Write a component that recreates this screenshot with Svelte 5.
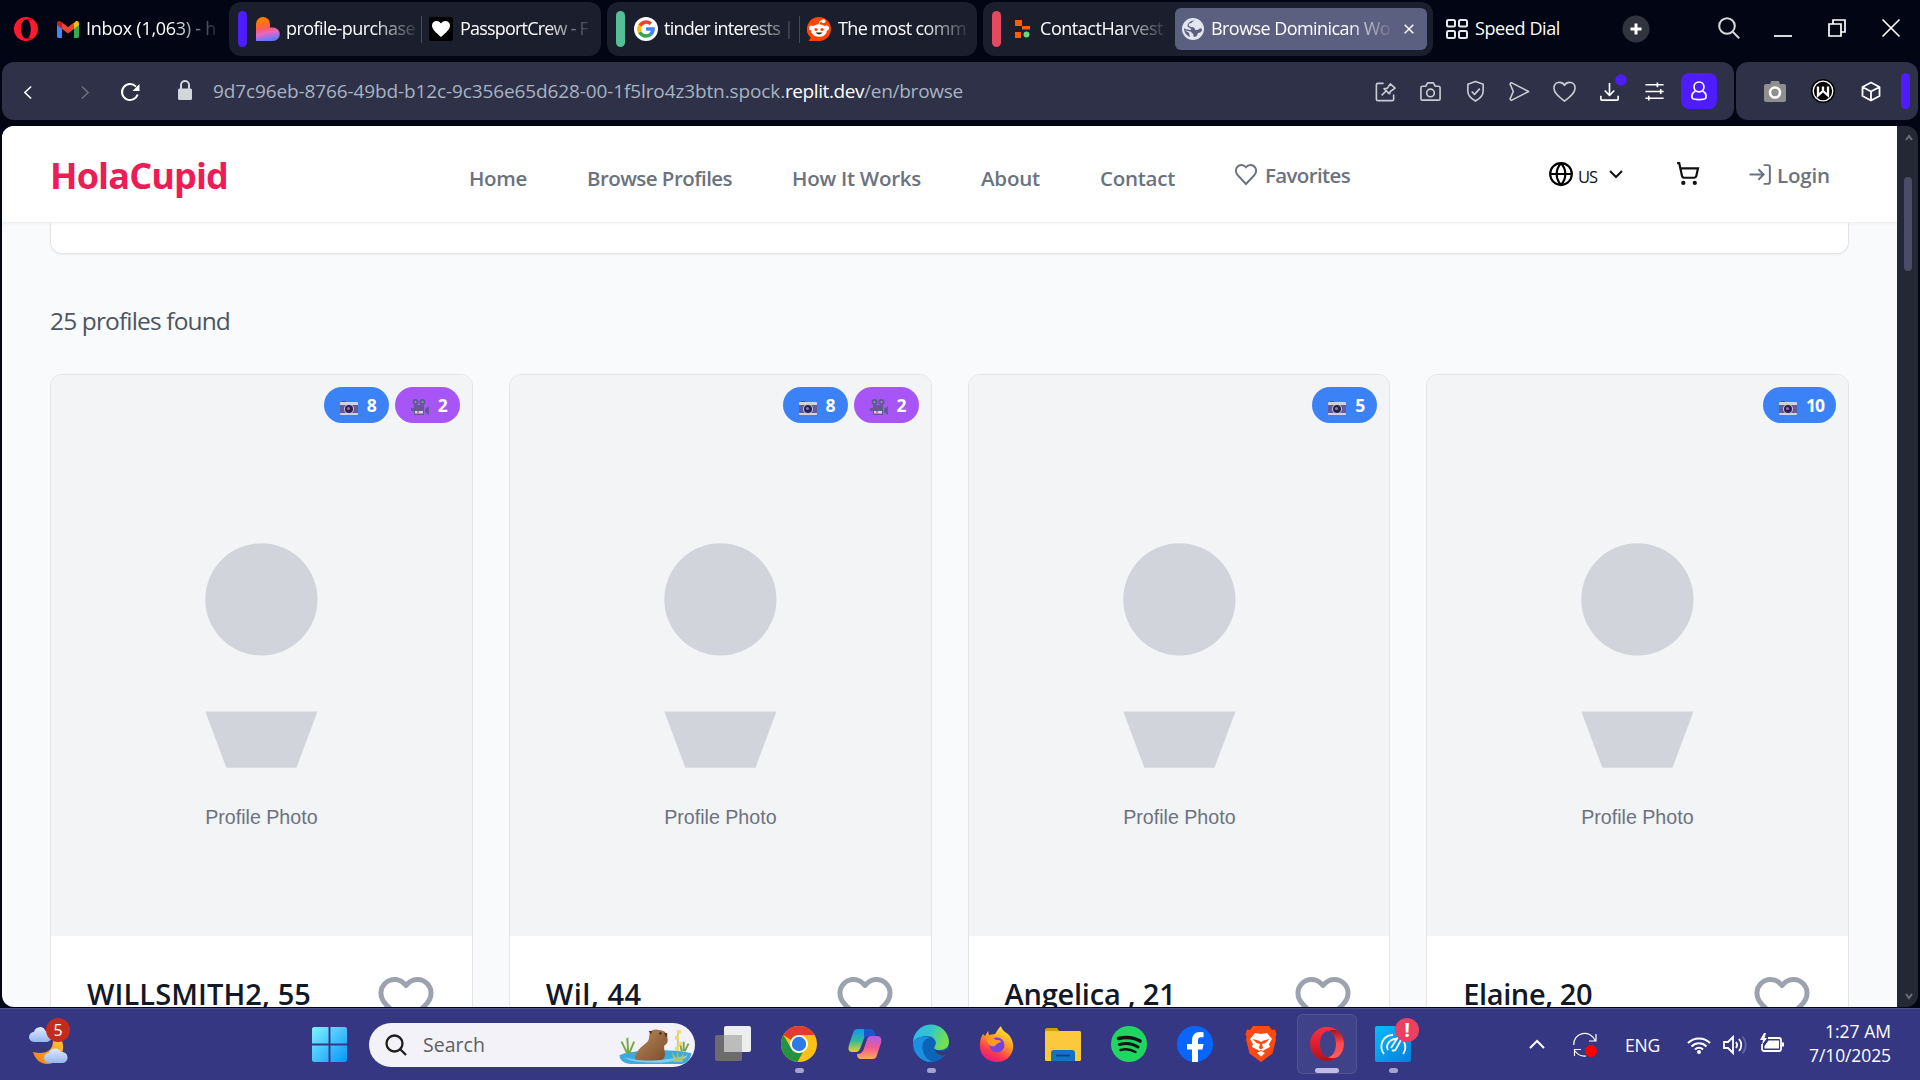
<script>
  const profiles = [
    { name: 'WILLSMITH2, 55', width: 223, photos: 8, videos: 2 },
    { name: 'Wil, 44', width: 95, photos: 8, videos: 2 },
    { name: 'Angelica , 21', width: 170, photos: 5, videos: 0 },
    { name: 'Elaine, 20', width: 128, photos: 10, videos: 0 }
  ];

  const links = [
    { text: 'Home', width: 58, gap: 0 },
    { text: 'Browse Profiles', width: 145, gap: 60 },
    { text: 'How It Works', width: 129, gap: 60 },
    { text: 'About', width: 59, gap: 60 },
    { text: 'Contact', width: 75, gap: 60 }
  ];

  // Tracks a label so that it fills the given width exactly.
  function fit(node, width) {
    node.style.letterSpacing = '0px';
    const natural = node.getBoundingClientRect().width;
    const count = [...node.textContent].length;
    node.style.letterSpacing = (width - natural) / count + 'px';
    node.style.width = width + 'px';
  }
</script>

{#snippet heart()}
  <path d="M20.420 4.580a5.400 5.400 0 0 0-7.650 0l-.77.78-.77-.78a5.400 5.400 0 0 0-7.650 0C1.460 6.700 1.330 10.280 4 13l8 8 8-8c2.670-2.720 2.540-6.300.42-8.420z" />
{/snippet}

<div class="screen">
  <div class="tabs">
    <svg class="opera" viewBox="0 0 24 24"><path fill="#ff1b2d" fill-rule="evenodd" d="M12 0C5.400 0 0 5.400 0 12s5.400 12 12 12 12-5.400 12-12S18.600 0 12 0zm0 2.500c3 0 4.800 4.200 4.800 9.500s-1.800 9.500-4.800 9.500S7.200 17.300 7.200 12 9 2.500 12 2.500z" /><path fill="#a70014" opacity=".75" d="M12 2.500c3-1.500 5-1 6.500 0-1.500-.3-3 .5-3.500 2.500-.8-1.600-1.800-2.500-3-2.500zM12 21.500c3 1.500 5 1 6.500 0-1.500.3-3-.5-3.500-2.500-.8 1.600-1.800 2.500-3 2.500z" /></svg>
    <svg class="gmail" viewBox="0 0 22 17"><path fill="#4285f4" d="M0 3v12.500c0 .8.700 1.500 1.500 1.500H5V7z" /><path fill="#34a853" d="M17 7v10h3.500c.8 0 1.500-.7 1.500-1.500V3z" /><path fill="#fbbc04" d="M17 2v6l5-4V2.200C22 .4 20-.6 18.500.5z" /><path fill="#ea4335" d="M5 8V1.600l6 4.500 6-4.500V8l-6 4.500z" /><path fill="#c5221f" d="M0 2.200V4l5 4V1.600L3.500.5C2-.6 0 .4 0 2.200z" /></svg>
    <span class="tab-text fade inbox" use:fit={130}>Inbox (1,063) - h</span>

    <div class="group g1">
      <i class="stripe violet"></i>
      <svg class="fav" viewBox="0 0 24 24"><defs><linearGradient id="lv" x1=".4" y1="0" x2=".6" y2="1"><stop offset=".15" stop-color="#ff7a00" /><stop offset=".45" stop-color="#fb5a5a" /><stop offset=".65" stop-color="#e667c7" /><stop offset="1" stop-color="#4f7dff" /></linearGradient></defs><path fill="url(#lv)" d="M0 24V7a7 7 0 0 1 14 0v3.500h3a6.700 6.700 0 0 1 0 13.500z" /></svg>
      <span class="tab-text fade t-a" use:fit={129}>profile-purchase</span>
      <i class="rule"></i>
      <svg class="fav after" viewBox="0 0 24 24"><rect width="24" height="24" rx="2" fill="#000" /><path fill="#fff" d="M12 20C7 15.500 3 12.500 3 8.500 3 3.500 9.500 2.500 12 6.500c2.500-4 9-3 9 2 0 4-4 7-9 11.500z" /></svg>
      <span class="tab-text fade t-b" use:fit={128}>PassportCrew - F</span>
    </div>

    <div class="group g2">
      <i class="stripe green"></i>
      <svg class="fav" viewBox="0 0 24 24"><circle cx="12" cy="12" r="12" fill="#fff" /><g fill="none" stroke-width="3.600"><path stroke="#ea4335" d="M5.900 8.800A7 7 0 0 1 16.800 6.900" /><path stroke="#fbbc05" d="M6 15.500a7 7 0 0 1 0-7" /><path stroke="#34a853" d="M16.500 17.400A7 7 0 0 1 5.800 15.200" /><path stroke="#4285f4" d="M12 12h7a7 7 0 0 1-2.600 5.500" /></g></svg>
      <span class="tab-text fade t-c" use:fit={129}>tinder interests |</span>
      <i class="rule"></i>
      <svg class="fav after" viewBox="0 0 24 24"><path fill="#ff4500" d="M12 0a12 12 0 1 1 0 24H1.500l2.300-3.200A12 12 0 0 1 12 0z" /><circle cx="4.500" cy="11" r="2.500" fill="#fff" /><circle cx="19.500" cy="11" r="2.500" fill="#fff" /><ellipse cx="12" cy="13.500" rx="8" ry="6.300" fill="#fff" /><path d="M12 8c.3-3 1.500-4.500 4-4" fill="none" stroke="#fff" stroke-width="1.200" /><circle cx="16.500" cy="4.300" r="2" fill="#fff" /><circle cx="9" cy="12.500" r="1.600" fill="#ff4500" /><circle cx="15" cy="12.500" r="1.600" fill="#ff4500" /><path d="M8.500 15.500h7q-3.500 4-7 0z" fill="#24292d" /></svg>
      <span class="tab-text fade t-d" use:fit={128}>The most comm</span>
    </div>

    <div class="group g3">
      <i class="stripe red"></i>
      <svg class="replit" viewBox="0 0 15 18"><path fill="#ff5f00" d="M0 0h7v6H0zM7 6h8v3.500H7zM0 12h6v6H0z" /><circle cx="11.500" cy="14.500" r="3" fill="#68d878" /></svg>
      <span class="tab-text fade t-e" use:fit={123}>ContactHarvest</span>
      <div class="active">
        <svg class="globe-tab" viewBox="0 0 22 22"><circle cx="11" cy="11" r="11" fill="#e4e6ee" /><path fill="#5a5f80" d="M13 2.500c-3 .5-3 3-5.500 3C6 6 7 9 9 9c3 0 4 1 4 3 2 0 4 0 5-2l2 1c0 3-2 4-4 4-1 3-2 4-4 4-1-2 0-3-2-4-1-2-4-2-7-2.500C3.500 13 6 14 7 15l1 4-2-1c-3-2-4-5-4-8l1 1c2 0 3 1 6 1 1-2-2-2-3-3-2-3 3-7 7-6.500z" /></svg>
        <span class="tab-text fade t-f" use:fit={179}>Browse Dominican Wo</span>
        <svg class="x" viewBox="0 0 10 10"><path d="M.7.7l8.600 8.600M9.300.7L.7 9.300" /></svg>
      </div>
    </div>

    <svg class="dial" viewBox="0 0 22 20"><g fill="none" stroke="#e8e9ee" stroke-width="2"><rect x="1" y="1" width="8" height="6.500" rx="1.500" /><rect x="13" y="1" width="8" height="6.500" rx="1.500" /><rect x="1" y="12" width="8" height="7" rx="1.500" /><rect x="13" y="12" width="8" height="7" rx="1.500" /></g></svg>
    <span class="tab-text" use:fit={85}>Speed Dial</span>
    <svg class="plus" viewBox="0 0 28 28"><circle cx="14" cy="14" r="13.500" fill="#31343f" /><path d="M14 8.500v11M8.500 14h11" stroke="#fff" stroke-width="3" /></svg>
    <svg class="find" viewBox="0 0 22 22"><circle cx="9" cy="9" r="7.800" /><path d="M14.700 14.700l6.500 6.500" /></svg>
    <svg class="win min" viewBox="0 0 18 18"><path d="M0 17h18" /></svg>
    <svg class="win" viewBox="0 0 18 18"><path d="M1 5h12v12H1zM5 5V1h12v12h-4" /></svg>
    <svg class="win" viewBox="0 0 18 18"><path d="M.5.5l17 17M17.500.5L.5 17.500" /></svg>
  </div>

  <div class="toolbar">
    <div class="address">
      <svg class="back" viewBox="0 0 9 15"><path d="M8 .7L1 7.500 8 14.300" /></svg>
      <svg class="forward" viewBox="0 0 9 15"><path d="M1 .7l7 6.800-7 6.800" /></svg>
      <svg class="reload" viewBox="0 0 20 18"><path d="M17.600 11.500A8 8 0 1 1 16 3.700" fill="none" stroke="#fff" stroke-width="2" /><path d="M19.500 1v7h-7z" fill="#fff" /></svg>
      <svg class="lock" viewBox="0 0 14 20"><path d="M3 9V5a4 4 0 0 1 8 0v4" fill="none" stroke="#d2d5d9" stroke-width="2" /><rect y="8.500" width="14" height="11.500" rx="1.500" fill="#d2d5d9" /></svg>
      <span class="url u1" use:fit={572}>9d7c96eb-8766-49bd-b12c-9c356e65d628-00-1f5lro4z3btn.spock.</span><span class="url host" use:fit={79}>replit.dev</span><span class="url" use:fit={99}>/en/browse</span>
      <div class="tools">
        <svg viewBox="0 0 24 24"><path d="M10 3.500H4a1.500 1.500 0 0 0-1.500 1.500v15A1.500 1.500 0 0 0 4 21.500h15a1.500 1.500 0 0 0 1.500-1.500v-5M8 16l4.500-4.500M10 8.500l6 6M11 9.500l3-1 3-4.500 5 4.500-5 3.500-1 3" /></svg>
        <svg viewBox="0 0 24 24"><path d="M3.500 6.500H7l2-3.500h6l2 3.500h3.500A1.500 1.500 0 0 1 22 8v11.500a1.500 1.500 0 0 1-1.500 1.500h-17A1.500 1.500 0 0 1 2 19.500V8a1.500 1.500 0 0 1 1.500-1.500z" /><circle cx="12" cy="13.500" r="4" /></svg>
        <svg viewBox="0 0 24 24"><path d="M12 1.500l8 3v7c0 4.500-3.500 8-8 10.500-4.500-2.500-8-6-8-10.500v-7zM8 12l3 3 5.500-6" /></svg>
        <svg viewBox="0 0 24 24"><path d="M4 3l17.500 9L4 21c-1.500.5-2-1-1.500-2l3-7-3-7c-.5-1 0-2.500 1.500-2z" /></svg>
        <svg viewBox="0 0 24 24"><path d="M12 22C6 17.500 1 13.500 1 8.500 1 2 9 .5 12 5.500c3-5 11-3.500 11 3 0 5-5 9-11 13.500z" /></svg>
        <svg class="bright" viewBox="0 0 24 24"><path d="M12 3v13M7 11l5 5 5-5M3 16.500V20a1 1 0 0 0 1 1h16a1 1 0 0 0 1-1v-3.500" /><circle class="dot" cx="24" cy="0" r="6" /></svg>
        <svg class="bright" viewBox="0 0 24 24"><path d="M2.500 5h19M2.500 12h19M2.500 19h19M15 2.500v5M18.500 9.500v5M6 16.500v5" /></svg>
      </div>
      <div class="profile"><svg viewBox="0 0 20 22"><circle cx="10" cy="6.500" r="5.500" /><path d="M6 11c-3.500 2-4.500 5-3.500 8 1 2 14 2 15 0 1-3 0-6-3.500-8" /></svg></div>
    </div>
    <div class="extensions">
      <svg class="cam" viewBox="0 0 22 24"><rect y="5" width="22" height="18" rx="2" fill="#8f8f8f" /><path d="M6 6l1-4h8l1 4z" fill="#8f8f8f" /><circle cx="11" cy="13.500" r="5" fill="none" stroke="#fff" stroke-width="2.600" /></svg>
      <svg class="w-badge" viewBox="0 0 24 24"><circle cx="12" cy="12" r="12" fill="#050505" /><circle cx="12" cy="12" r="9.800" fill="#050505" stroke="#fff" stroke-width="1.300" /><path d="M7 7.500v9L12 12l5 4.500v-9M12 7.500V12" fill="none" stroke="#fff" stroke-width="2.300" /></svg>
      <svg class="cube" viewBox="0 0 20 20"><path d="M10 1l8.500 4.500v9L10 19l-8.500-4.500v-9zM1.500 5.500L10 10l8.500-4.500M10 10v9" /></svg>
      <i class="stripe violet"></i>
    </div>
  </div>

  <div class="view">
    <div class="page">
      <header>
        <span class="logo" use:fit={178}>HolaCupid</span>
        <nav>
          {#each links as link}
            <a class="link" href="#top" style:margin-left="{link.gap}px" use:fit={link.width}>{link.text}</a>
          {/each}
          <svg class="fav-heart" viewBox="0 0 22 21"><path d="M11 20L3 11.500C-1.500 6.500 2 1 6.500 1 9 1 10 2 11 3.200 12 2 13 1 15.500 1c4.500 0 8 5.500 3.500 10.500z" /></svg>
          <a class="link up" href="#top" use:fit={85}>Favorites</a>
        </nav>
        <svg class="globe" viewBox="0 0 24 24"><circle cx="12" cy="12" r="10" /><path d="M2 12h20M12 2a14.500 14.500 0 0 0 0 20 14.500 14.500 0 0 0 0-20" /></svg>
        <span class="us" use:fit={19}>US</span>
        <svg class="chev" viewBox="0 0 14 8"><path d="M1 1l6 6 6-6" /></svg>
        <svg class="cart" viewBox="0 0 24 24"><circle cx="8" cy="21" r="1" /><circle cx="19" cy="21" r="1" /><path d="M2.050 2.050h2l2.660 12.420a2 2 0 0 0 2 1.580h9.780a2 2 0 0 0 1.950-1.570l1.650-7.430H5.120" /></svg>
        <svg class="login-icon" viewBox="0 0 24 24"><path d="M15 3h4a2 2 0 0 1 2 2v14a2 2 0 0 1-2 2h-4M10 17l5-5-5-5M15 12H1.500" /></svg>
        <a class="link up" href="#top" use:fit={53}>Login</a>
      </header>

      <main>
        <div class="filters"></div>
        <p class="count"><span use:fit={180}>25 profiles found</span></p>
        <div class="cards">
          {#each profiles as p}
            <article>
              <div class="photo">
                <svg class="placeholder" viewBox="0 0 300 400">
                  <g fill="#d1d5db"><circle cx="150" cy="160" r="40" /><path d="M110 240h80l-15 40h-50z" /></g>
                  <text x="150" y="320" text-anchor="middle">Profile Photo</text>
                </svg>
                <div class="badges">
                  <span class="badge blue">
                    <svg viewBox="0 0 18 14"><rect x="2" y="0" width="4" height="2" fill="#55506e" /><rect y="1" width="18" height="13" rx="1" fill="#d4d2dc" /><rect y="4" width="18" height="8" fill="#65589b" /><circle cx="9" cy="8" r="5" fill="#c9c6d0" /><circle cx="9" cy="8" r="4" fill="#2b2050" /><circle cx="8.500" cy="7.500" r="1.500" fill="#8575c9" /></svg>
                    <b use:fit={p.photos > 9 ? 18 : 10}>{p.photos}</b>
                  </span>
                  {#if p.videos}
                    <span class="badge purple">
                      <svg class="movie" viewBox="0 0 18 16"><circle cx="4.500" cy="3" r="3" fill="#635994" /><circle cx="11.500" cy="3" r="3" fill="#635994" /><circle cx="4.500" cy="3" r="1" fill="#9b90cc" /><circle cx="11.500" cy="3" r="1" fill="#9b90cc" /><path fill="#635994" d="M3 6h10v10H3zM14 10l4-3v9l-4-3zM0 9h3v3H0z" /><path fill="#ddd3e8" d="M4 12h8v2.500H4z" /><path fill="#e5668a" d="M6 12h2v2.500H6z" /></svg>
                      <b use:fit={10}>{p.videos}</b>
                    </span>
                  {/if}
                </div>
              </div>
              <div class="info">
                <h3 use:fit={p.width + 1}>{p.name}</h3>
                <svg viewBox="0 0 24 24">{@render heart()}</svg>
              </div>
            </article>
          {/each}
        </div>
      </main>
    </div>
    <div class="scroll">
      <svg viewBox="0 0 8 6"><path d="M1 5l3-4 3 4" /></svg>
      <i class="thumb"></i>
      <svg viewBox="0 0 8 6"><path d="M1 1l3 4 3-4" /></svg>
    </div>
  </div>

  <div class="taskbar">
    <div class="weather">
      <svg viewBox="0 0 48 48"><defs><linearGradient id="cl" x1="0" y1="0" x2="0" y2="1"><stop offset="0" stop-color="#dfeaff" /><stop offset="1" stop-color="#96b6ef" /></linearGradient><linearGradient id="mo" x1="1" y1="0" x2="0" y2="1"><stop offset="0" stop-color="#ffc22e" /><stop offset="1" stop-color="#ef7d12" /></linearGradient></defs>
        <path fill="url(#cl)" d="M5 19a5 5 0 0 1 0-10 6 6 0 0 1 11.500-1A5.500 5.500 0 0 1 18 19z" />
        <path fill="url(#mo)" d="M33 18c4 11-3 23-15 23C11 41 6 36 4 29c12 3 20-1 20-11z" />
        <path fill="url(#cl)" d="M20 40a5 5 0 0 1 0-10 6.500 6.500 0 0 1 12-1 5.500 5.500 0 0 1 2 11z" />
      </svg>
      <span class="alert">5</span>
    </div>
    <svg class="start" viewBox="0 0 36 36"><defs><linearGradient id="wn" x1="0" y1="0" x2="1" y2="1"><stop offset="0" stop-color="#7df3ff" /><stop offset="1" stop-color="#0a93f8" /></linearGradient></defs><path fill="url(#wn)" d="M1.500 0H17v17H0V1.500zM19 0h15.500L36 1.500V17H19zM0 19h17v17H1.500L0 34.500zM19 19h17v15.500L34.500 36H19z" /></svg>
    <div class="search">
      <svg class="mag" viewBox="0 0 22 22"><circle cx="9.500" cy="9.500" r="8" /><path d="M15.500 15.500l5.500 5.500" /></svg>
      <span use:fit={62}>Search</span>
      <svg class="capy" viewBox="0 0 74 36"><defs><linearGradient id="fur" x1="0" y1="0" x2="1" y2="1"><stop offset="0" stop-color="#b98a5c" /><stop offset="1" stop-color="#7a4d2c" /></linearGradient></defs>
        <path fill="#3fa9de" d="M0 27c10-6 60-7 74-2-1 6-5 10-10 11H12C5 36 0 32 0 27z" /><path fill="#7fd0f0" d="M4 29c15 4 40 5 66-2l-2 3c-20 6-42 6-58 2z" />
        <path d="M8 25L2 13M9 25L8 9M10 25l5-12M64 23l-2-9M66 23v-10M67 23l4-8" stroke="#76a843" stroke-width="2" fill="none" />
        <path fill="url(#fur)" d="M16 31c0-8 6-12 12-17 3-3 2-5 3-9 1-4 5-5 9-4 4 0 9 2 9 7 1 4 1 7-3 9-1 5 3 9-1 14-8 2-22 2-29 0z" /><circle cx="42" cy="4.500" r="1.100" fill="#2c1a10" /><path fill="#5b3a22" d="M30 2l4 0-2 4zM46 4h3v4h-2z" />
        <path d="M60 32V3" stroke="#a3b84c" stroke-width="1.200" /><path fill="#f4d869" d="M59 1h4v4h-4zM57 7h4v4h-4zM60 13h4v4h-4zM57 18h4v4h-4z" /><path fill="#a9c957" d="M54 24l5 7V24l3 8 4-8-1 10H56z" />
      </svg>
    </div>

    <div class="apps">
      <div class="app"><svg viewBox="0 0 36 36"><rect y="9" width="27" height="26" rx="2" fill="#6c6c70" /><rect x="9" width="27" height="26" rx="2" fill="#eceded" /><path d="M9 9h18v17H9z" fill="#bcbcbd" /></svg></div>
      <div class="app"><svg viewBox="0 0 36 36"><circle cx="18" cy="18" r="18" fill="#fbc116" /><path fill="#e33b2e" d="M2.400 9A18 18 0 0 1 33.600 9H18a9 9 0 0 0-8 5z" /><path fill="#229342" d="M2.400 9l7.800 13.500A9 9 0 0 0 18 27l4-1-5.500 10A18 18 0 0 1 2.400 9z" /><circle cx="18" cy="18" r="9" fill="#fff" /><circle cx="18" cy="18" r="7.200" fill="#2a7be8" /></svg><i></i></div>
      <div class="app"><svg viewBox="0 0 36 36"><defs><linearGradient id="ca" x1="0" y1="0" x2="0" y2="1"><stop offset="0" stop-color="#1597f0" /><stop offset=".5" stop-color="#32b99b" /><stop offset="1" stop-color="#e6cf26" /></linearGradient><linearGradient id="cb" x1="0" y1="0" x2="0" y2="1"><stop offset="0" stop-color="#a462ee" /><stop offset=".5" stop-color="#f2598e" /><stop offset="1" stop-color="#ffa95c" /></linearGradient></defs><path fill="url(#ca)" d="M11 3h12c3 0 4 2 5 7h-7c-3 0-4 2-5 5l-3 8c-1 2-2 3-4 3H5c-4 0-4-4-3-7l4-12c1-3 2-4 5-4z" /><path fill="#1557cf" d="M17 3h6c3 0 4 2 5 7h-7c-2 0-3 1-4 3z" /><path fill="url(#cb)" d="M25 33H14c-2 0-4-1-4-5 3 0 5-1 6-4l4-11c1-2 2-3 4-3h6c4 0 5 3 4 7l-4 12c-1 3-2 4-5 4z" /><path fill="#353782" d="M17 14l3-1-4 12-4 1z" /></svg></div>
      <div class="app"><svg viewBox="0 0 36 36"><defs><linearGradient id="ea" x1="0" y1="0" x2="1" y2=".3"><stop offset="0" stop-color="#2fb4f0" /><stop offset=".5" stop-color="#33c5cf" /><stop offset="1" stop-color="#73e04c" /></linearGradient></defs><circle cx="18" cy="18" r="18" fill="#0c63b8" /><path fill="url(#ea)" d="M0 17A18 18 0 0 1 36 16c0 5-4 8-9 8-6 0-7-2-5-4 3-5-2-10-8-10C8 10 2 12 0 17z" /><path fill="#1b8fe0" d="M0 17c3-6 11-8 17-5-6 0-9 6-7 13 1 5 5 9 10 11C9 37 0 28 0 17z" /><path fill="#353782" d="M22 20c-2 3 2 5 6 5 3 0 5-1 7-2l1 2-4 4c-5 2-12-3-10-9z" /></svg><i></i></div>
      <div class="app"><svg viewBox="0 0 36 36"><defs><linearGradient id="ff" x1=".8" y1="0" x2=".3" y2="1"><stop offset="0" stop-color="#fff23a" /><stop offset=".45" stop-color="#ff9826" /><stop offset=".75" stop-color="#ff3a4b" /><stop offset="1" stop-color="#e31587" /></linearGradient></defs><path fill="url(#ff)" d="M4 8l2 2 3-5 1 4 6-1c2-3 3-5 6-8 1 5 5 6 8 9l2 3c6 11-1 24-14 24C7 36 0 28 1 18c0-4 1-7 3-10z" /><circle cx="18" cy="19" r="7.500" fill="#7542e5" /><path fill="#ff9a28" d="M7 12c5-1 8 0 10 2 3 0 5 0 5 2-3 1-5 2-6 4-4 1-7-1-9-8z" /></svg></div>
      <div class="app"><svg viewBox="0 0 36 36"><path fill="#d79a08" d="M0 4c0-1 1-2 2-2h10l3 4v6H0z" /><rect y="5" width="36" height="30" rx="1.500" fill="#fdc93c" /><path fill="#1372c4" d="M6 35V27c0-2 1-3 3-3h18c2 0 3 1 3 3v8z" /><path d="M11 29.500h14" stroke="#0a4580" stroke-width="1.800" /></svg></div>
      <div class="app"><svg viewBox="0 0 36 36"><circle cx="18" cy="18" r="18" fill="#1fd661" /><g fill="none" stroke="#10151a" stroke-linecap="round"><path stroke-width="3.600" d="M7.500 12.500c8-2 15.500-1 21.500 2.500" /><path stroke-width="3" d="M8.500 18.500c6.500-2 13-1 18.500 2.500" /><path stroke-width="2.500" d="M9.500 24c5.500-1.500 10.500-.5 15 2" /></g></svg></div>
      <div class="app"><svg viewBox="0 0 36 36"><circle cx="18" cy="18" r="18" fill="#0866ff" /><path fill="#fff" d="M15 36V23.500h-5V18h5v-3c0-6 3-9 8-9l3.500.3v5H24c-2.500 0-3 1.500-3 3V18h5.500l-1 5.500H21V36z" /></svg></div>
      <div class="app"><svg viewBox="0 0 36 36"><path fill="#fb4a12" d="M10 0h16l3 4 3-.5 1.500 5-1 2 .5 3-3.500 14L18 36 6.500 27.500 3 13.500l.5-3-1-2L4 3.500 7 4z" /><path fill="#fff" fill-rule="evenodd" d="M12 7l6 1 6-1 5 6-3 5 1 3-6 3-1 1-2-1-2 1-1-1-6-3 1-3-3-5zM9.500 13l4 4 3.500 1-1 4 2 1.500 2-1.500-1-4 3.500-1 4-4-6 1.500-2.500 1.500-2.500-1.500z" /><path fill="#fff" d="M18 25l4 2-4 3.500-4-3.500z" /></svg></div>
      <div class="app current"><svg viewBox="0 0 36 36"><defs><linearGradient id="op" x1="0" y1="0" x2="0" y2="1"><stop offset="0" stop-color="#ff2438" /><stop offset="1" stop-color="#b3000f" /></linearGradient><linearGradient id="oq" x1="0" y1="0" x2="0" y2="1"><stop offset="0" stop-color="#a30010" /><stop offset=".5" stop-color="#ff4147" /><stop offset="1" stop-color="#ff5459" /></linearGradient></defs><path fill="url(#op)" fill-rule="evenodd" d="M18 1A17 17 0 1 0 18 35 17 17 0 1 0 18 1zm1 4c4.500 0 8 5.500 8 13s-3.500 13-8 13-8-5.500-8-13 3.500-13 8-13z" /><path fill="url(#oq)" d="M19 5c4-2 8-1.500 11 1 6.500 6 6.500 18 0 24-3 2.500-7 3-11 1 4.500 0 8-5.500 8-13S23.500 5 19 5z" /></svg><i></i></div>
      <div class="app"><svg viewBox="0 0 36 36"><defs><linearGradient id="sp" x1="0" y1="0" x2="1" y2="1"><stop offset="0" stop-color="#07bbff" /><stop offset="1" stop-color="#057fd8" /></linearGradient></defs><rect width="36" height="36" rx="2" fill="url(#sp)" /><path fill="none" stroke="#fff" stroke-width="1.800" d="M9 28C3 20 8 9 18 9M29 16c2 4 2 8-1 12M13 24c-3-5 2-11 8-11M16 22l7-11M17 24c1 1 3 1 4-1l5-9" /></svg><span class="alert warn">!</span><i></i></div>
    </div>

    <div class="tray">
      <svg class="caret" viewBox="0 0 16 9"><path d="M1 8l7-7 7 7" /></svg>
      <svg class="sync" viewBox="0 0 24 24"><path d="M.7 12A11 11 0 0 1 22 7.500M23 1v7h-7M1.500 23v-6.500H8M2 18c3 4 7 5.500 11 5" /><circle cx="18" cy="18" r="6" /></svg>
      <span class="eng" use:fit={35}>ENG</span>
      <svg class="wifi" viewBox="0 0 24 18"><path d="M1 7a15.500 15.500 0 0 1 22 0M4.500 10.500a10.500 10.500 0 0 1 15 0M8 13.500a5.600 5.600 0 0 1 8 0" /><circle cx="12" cy="16" r="2" /></svg>
      <svg class="sound" viewBox="0 0 25 20"><path d="M1 7h4l5-5v16l-5-5H1zM13 7a5 5 0 0 1 0 6M16 4a9 9 0 0 1 0 12" /><path class="dim" d="M19.500 1.500a13 13 0 0 1 0 17" /></svg>
      <svg class="battery" viewBox="0 0 24 20"><path fill="none" stroke="#fff" stroke-width="1.800" d="M8 5h11a2 2 0 0 1 2 2v9a2 2 0 0 1-2 2H4a2 2 0 0 1-2-2v-5" /><path fill="#fff" d="M8.500 7.500H19v8H4.500v-2.500zM21.500 9.500H24v4h-2.500zM4 0L0 7h3l-1 5 5-7H4.500L6 0z" /></svg>
      <div class="clock"><span use:fit={66}>1:27 AM</span><span use:fit={82}>7/10/2025</span></div>
    </div>
  </div>
</div>

<style>
  :global(body) { margin: 0; background: #020614; overflow: hidden; }
  .screen { width: 1920px; height: 1080px; display: flex; flex-direction: column; background: #020614; font-family: 'Open Sans', 'Noto Sans', sans-serif; overflow: hidden; }
  .screen * { box-sizing: border-box; }
  svg { display: block; flex: none; overflow: visible; }
  span, a, h3 { white-space: nowrap; }

  .tabs { height: 62px; padding: 2px 0 6px 14px; display: flex; align-items: center; flex: none; }
  .opera { width: 24px; height: 24px; }
  .gmail { width: 22px; height: 17px; margin-left: 19px; }
  .tab-text { display: inline-block; flex: none; font-size: 18px; line-height: 26px; color: #fff; position: relative; top: -1px; overflow: hidden; }
  .fade { -webkit-mask-image: linear-gradient(90deg, #000 calc(100% - 44px), rgba(0, 0, 0, .12)); mask-image: linear-gradient(90deg, #000 calc(100% - 44px), rgba(0, 0, 0, .12)); }
  .inbox { margin-left: 7px; }
  .group { height: 54px; border-radius: 12px; background: #1b1e2d; display: flex; align-items: center; padding-left: 9px; flex: none; }
  .g1 { width: 372px; margin-left: 13px; }
  .g2 { width: 370px; margin-left: 6px; }
  .g3 { width: 450px; margin-left: 6px; }
  .stripe { width: 9px; height: 36px; border-radius: 5px; flex: none; }
  .violet { background: #4e1dff; }
  .green { background: #55c096; }
  .red { background: #e34a60; }
  .fav { width: 24px; height: 24px; margin-left: 9px; }
  .fav.after { margin-left: 7px; }
  .rule { width: 1px; height: 27px; background: #464956; flex: none; }
  .t-a { margin: 0 6px 0 6px; }
  .t-b, .t-d { margin-left: 7px; }
  .t-c { margin: 0 6px 0 6px; }
  .replit { width: 15px; height: 18px; margin-left: 14px; }
  .t-e { margin: 0 12px 0 10px; }
  .active { width: 252px; height: 42px; background: #5b5f80; border-radius: 6px; display: flex; align-items: center; padding-left: 7px; }
  .globe-tab { width: 22px; height: 22px; }
  .t-f { margin: 0 14px 0 7px; }
  .x { width: 10px; height: 10px; fill: none; stroke: #fff; stroke-width: 1.5; }
  .dial { width: 22px; height: 20px; margin: 0 7px 0 13px; }
  .plus { width: 28px; height: 28px; margin-left: 62px; }
  .find { width: 22px; height: 22px; margin: -2px 34px 0 68px; fill: none; stroke: #d8d9de; stroke-width: 2; }
  .win { width: 18px; height: 18px; margin: -2px 36px 0 0; fill: none; stroke: #fff; stroke-width: 1.7; }

  .toolbar { height: 58px; display: flex; gap: 2px; padding: 0 2px; flex: none; }
  .address, .extensions { background: #2e3147; border-radius: 12px; display: flex; align-items: center; height: 58px; }
  .address { width: 1732px; padding-left: 22px; }
  .back, .forward { width: 8px; height: 15px; fill: none; stroke: #fff; stroke-width: 1.8; margin-top: 2px; }
  .forward { stroke: #6c6f80; margin-left: 49px; }
  .reload { width: 20px; height: 18px; margin: 2px 1px 0 31px; }
  .lock { width: 14px; height: 20px; margin: -2px 21px 0 37px; }
  .url { display: inline-block; flex: none; color: #a7b3c1; font-size: 19px; line-height: 28px; }
  .host { color: #fff; }
  .tools { display: flex; margin-left: 411px; gap: 21.800px; }
  .tools svg { width: 23px; height: 23px; fill: none; stroke: #c9ccd2; stroke-width: 1.7; stroke-linejoin: round; }
  .tools svg.bright { stroke: #fff; }
  .tools svg .dot { fill: #4e1dff; stroke: none; }
  .profile { width: 36px; height: 36px; margin-left: 15px; background: #4e1dff; border-radius: 8px; display: grid; place-items: center; }
  .profile svg { width: 18px; height: 20px; fill: none; stroke: #fff; stroke-width: 1.9; }
  .extensions { width: 182px; padding-left: 28px; }
  .cam { width: 22px; height: 24px; }
  .w-badge { width: 24px; height: 24px; margin-left: 25px; }
  .cube { width: 20px; height: 21px; margin: 0 20px 0 26px; fill: none; stroke: #fff; stroke-width: 1.8; stroke-linejoin: round; }

  .view { margin: 6px 2px 0; height: 881px; display: flex; flex: none; }
  .page { width: 1895px; background: #f9fafc; border-radius: 12px 0 0 12px; overflow: hidden; }
  header { height: 97px; background: #fff; border-bottom: 1px solid #f0f0f2; display: flex; align-items: center; padding-left: 48px; box-shadow: 0 1px 3px rgba(0, 0, 0, .04); position: relative; }
  .logo { display: inline-block; font-size: 36px; line-height: 48px; font-weight: 700; color: #ee1c56; flex: none; padding-top: 4px; }
  nav { display: flex; align-items: center; width: 1079px; margin-left: 241px; flex: none; }
  .link { display: inline-block; flex: none; font-size: 20.500px; font-weight: 600; line-height: 28px; color: #6b7280; text-decoration: none; position: relative; top: 4px; }
  .link.up { top: 1px; }
  .fav-heart { width: 22px; height: 21px; margin: 0 8px 0 60px; fill: none; stroke: #6b7280; stroke-width: 1.9; }
  .globe { width: 26px; height: 26px; margin-top: -1px; fill: none; stroke: #000; stroke-width: 2; }
  .us { display: inline-block; font-size: 16.500px; margin: 4px 12px 0 4px; color: #111; }
  .chev { width: 14px; height: 8px; fill: none; stroke: #111; stroke-width: 2; }
  .cart { width: 25px; height: 25px; margin: -1px 48px 0 52px; fill: none; stroke: #111; stroke-width: 2.100; }
  .login-icon { width: 25px; height: 25px; margin: 0 4px 0 0; fill: none; stroke: #6b7280; stroke-width: 1.9; }

  main { padding: 0 48px; }
  .filters { height: 31px; background: #fff; border: 1px solid #e4e4e6; border-top: 0; border-radius: 0 0 12px 12px; box-shadow: 0 1px 2px rgba(0, 0, 0, .05); }
  .count { margin: 50px 0 37px; height: 33px; font-size: 24.500px; line-height: 33px; color: #4b5563; }
  .count span { display: inline-block; }
  .cards { display: grid; grid-template-columns: repeat(4, 1fr); gap: 36px; }
  article { height: 760px; background: #fff; border: 1px solid #e4e4e6; border-radius: 12px; overflow: hidden; }
  .photo { height: 561px; background: #f3f4f6; position: relative; }
  .placeholder { width: 100%; height: 561px; }
  .placeholder text { font: 14px 'Liberation Sans', Arial, sans-serif; fill: #6b7280; }
  .badges { position: absolute; top: 12px; right: 12px; display: flex; gap: 6px; }
  .badge { height: 36px; padding: 0 12px 0 16px; border-radius: 18px; display: flex; align-items: center; gap: 9px; color: #fff; font-size: 17.500px; }
  .badge b { display: inline-block; font-weight: 700; }
  .badge svg { width: 18px; height: 14px; margin-top: 6px; }
  .badge svg.movie { height: 16px; margin-top: 3px; }
  .blue { background: #3b82f6; }
  .purple { background: #a855f7; }
  .info { display: flex; justify-content: space-between; padding: 31px 36px 0 36px; }
  h3 { display: inline-block; margin: 6px 0 0; font-size: 29px; line-height: 42px; font-weight: 600; color: #111827; }
  .info svg { width: 60px; height: 60px; margin-top: 5px; fill: none; stroke: #9ca3af; stroke-width: 2; stroke-linecap: round; stroke-linejoin: round; }

  .scroll { width: 21px; background: #242834; border-radius: 0 12px 12px 0; display: flex; flex-direction: column; align-items: center; padding: 9px 0 8px; }
  .scroll svg { width: 8px; height: 6px; margin-left: 2px; fill: none; stroke: #6c6f78; stroke-width: 2; }
  .thumb { width: 8px; height: 94px; border-radius: 4px; background: #4a4d66; margin: 36px 0 auto 1px; }

  .taskbar { height: 72px; margin-top: 1px; background: #353782; border-top: 1px solid #4c4e82; display: flex; align-items: center; flex: none; }
  .weather { width: 48px; height: 48px; margin-left: 28px; position: relative; }
  .weather svg { width: 48px; height: 48px; margin: 2px 0 0 1px; }
  .alert { position: absolute; left: 18px; top: -3px; width: 24px; height: 24px; border-radius: 50%; background: #c42b1c; color: #fff; font-size: 16px; line-height: 24px; text-align: center; }
  .start { width: 35px; height: 35px; margin-left: 236px; }
  .search { width: 326px; height: 44px; border-radius: 22px; background: #f3f2f8; margin-left: 22px; display: flex; align-items: center; padding-left: 16px; }
  .mag { width: 22px; height: 22px; fill: none; stroke: #1f1f1f; stroke-width: 2.300; }
  .search span { display: inline-block; font-size: 19.500px; color: #5e5e62; margin: 0 134px 0 16px; }
  .capy { width: 73px; height: 35px; margin-top: 4px; }
  .apps { display: flex; margin-left: 5px; }
  .app { width: 66px; height: 60px; display: flex; flex-direction: column; align-items: center; padding-top: 11px; position: relative; }
  .app svg { width: 36px; height: 36px; }
  .app i { width: 9px; height: 5px; border-radius: 3px; background: #a3a3cc; margin-top: 6px; }
  .current::before { content: ''; position: absolute; inset: -1px 3px 1px; background: rgba(255, 255, 255, .06); border: 1px solid rgba(255, 255, 255, .09); border-radius: 6px; }
  .app.current i { width: 24px; background: #bcb8e6; }
  .alert.warn { left: 35px; top: 3px; background: #ec4061; font-weight: 700; font-size: 20px; }
  .tray { display: flex; align-items: center; margin-left: 103px; color: #fff; font-size: 17.500px; }
  .caret { width: 16px; height: 9px; fill: none; stroke: #fff; stroke-width: 2; }
  .sync { width: 24px; height: 24px; margin: 0 28px; fill: none; stroke: #fff; stroke-width: 1.2; }
  .sync circle { fill: #f00; stroke: none; }
  .eng { display: inline-block; }
  .wifi { width: 24px; height: 18px; margin-left: 27px; fill: none; stroke: #fff; stroke-width: 2; }
  .wifi circle { fill: #fff; stroke: none; }
  .sound { width: 25px; height: 20px; margin: 0 12px; fill: none; stroke: #fff; stroke-width: 1.8; }
  .sound .dim { stroke: #62649f; }
  .battery { width: 24px; height: 20px; margin-top: -3px; }
  .clock { display: flex; flex-direction: column; align-items: flex-end; width: 107px; line-height: 24px; margin-top: -3px; }
  .clock span { display: inline-block; }
</style>
